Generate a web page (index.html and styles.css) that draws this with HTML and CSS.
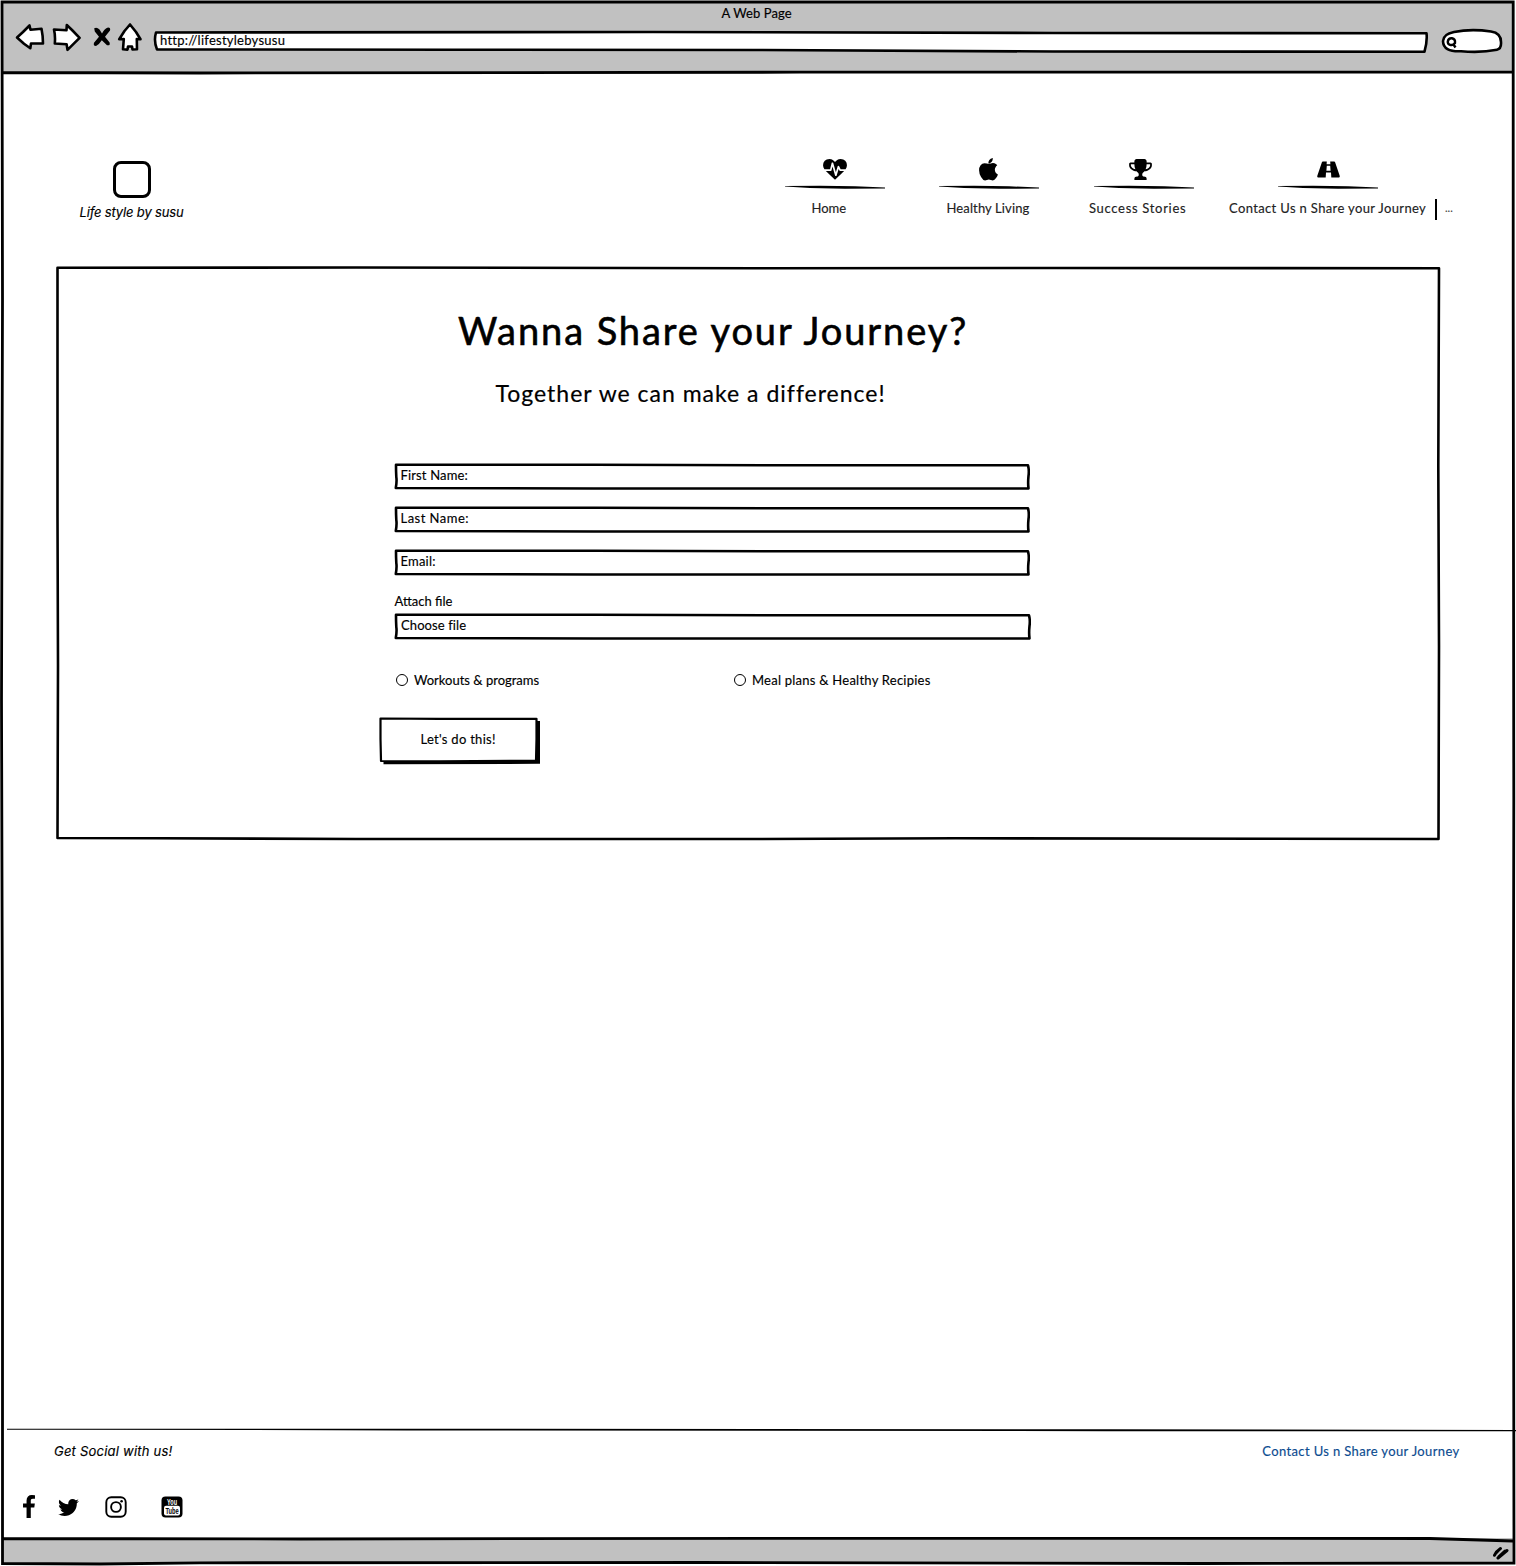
FILE: index.html
```html
<!DOCTYPE html>
<html lang="en">
<head>
<meta charset="utf-8">
<title>A Web Page</title>
<link rel="stylesheet" href="styles.css">
</head>
<body>
<div class="window">
  <header class="toolbar">
    <div class="window-title">A Web Page</div>
    <div class="controls">
      <svg class="ctl back" viewBox="0 0 30 30" width="30" height="30"><path class="key" d="M2 15.500 8 10 14.500 3.500 15.500 7.800 26.500 6.800Q28 14 28 21.500L16 21.500 15.300 26.300 9 21.800Z"/></svg>
      <svg class="ctl forward" viewBox="0 0 30 30" width="30" height="30"><path class="key" d="M3 7.500 15.500 8.200 15.800 3 21 8 28.600 15.800 16.500 27.800 15.600 22.200 3.800 21.500Q4.500 14 3 7.500Z"/></svg>
      <svg class="ctl stop" viewBox="0 0 20 22" width="20" height="22"><path d="M2.200 2.200Q5 .8 7.500 3.500L10 7.500Q12.500 2.800 16 1.600 18.800 1.500 18 4.500L13 10.800 17.600 16.500Q18.500 20 15 19.200L9.800 14.200Q7.500 18 4 20 1 20 2 16.800L7 10.800 2.800 5.500Z"/></svg>
      <svg class="ctl home" viewBox="0 0 26 30" width="26" height="30"><path class="key" d="M13 2.500 7.500 9 2.200 17.200 6.800 17 6 27.300 10.500 27.600 11 24.500 15 24.500 15.500 27.500 20 27.300 19.800 17 23.500 17.200 19 10Z"/></svg>
      <div class="address">
        <svg class="outline" viewBox="0 0 1276 24"><path d="M3 2.500 500 2 900 3 1273.500 3.200Q1274.500 11 1271.500 21.700L900 21.500 600 20 300 19.700 4 19.500Q.5 11 3 2.500Z"/></svg>
        <span>http://lifestylebysusu</span>
      </div>
      <svg class="ctl search" viewBox="0 0 62 26" width="62" height="26"><path class="key" d="M13 4Q30 .5 50 3.500 60 5 60 14 60.500 21 56 21.700 40 25 20 23.200 2 24 2 13 2.500 6 13 4Z"/><path class="glass" d="M6.800 13.500Q7.500 10 11 10.300 14.500 11 14 15 12 17.800 9 16.800 6.500 16 6.800 13.500ZM12.500 16.500 14.500 19.500"/></svg>
    </div>
  </header>

  <div class="masthead">
    <a class="brand">
      <span class="brand-mark"></span>
      <span class="brand-name">Life style by susu</span>
    </a>
    <nav class="nav">
      <a class="nav-item nav-home">
        <svg class="icon" viewBox="0 0 1792 1536" width="24" height="20.500"><path d="M1280 896h305q-5 6-10 10.500t-9 7.500l-3 4-623 600q-18 18-44 18t-44-18l-624-602q-5-2-21-20h369q22 0 39.500-13.500t22.500-34.500l70-281 190 667q6 20 23 33t39 13q21 0 38-13t23-33l146-485 56 112q18 35 57 35zm512-428q0 145-103 300h-369l-111-221q-8-17-25.500-27t-36.500-8q-45 5-56 46l-129 430-196-686q-6-20-23.500-33t-39.500-13-39 13.500-22 34.500l-116 464h-423q-103-155-103-300 0-220 127-344t351-124q62 0 126.500 21.500t120 58 95.500 68.500 76 68q36-36 76-68t95.500-68.500 120-58 126.500-21.500q224 0 351 124t127 344z"/></svg>
        <svg class="rule" viewBox="0 0 100 4"><path d="M0 1 35 .8 70 1.300 100 2.600 100 3.600 60 3.700 25 3 0 1.600Z"/></svg>
        <span class="label">Home</span>
      </a>
      <a class="nav-item nav-living">
        <svg class="icon" viewBox="193 0 1392 1664" width="19" height="22.500"><path d="M1585 1215q-39 125-123 250-129 196-257 196-49 0-140-32-86-32-151-32-61 0-142 33-81 34-132 34-152 0-301-259-147-261-147-503 0-228 113-374 113-144 284-144 72 0 177 30 104 30 138 30 45 0 143-34 102-34 173-34 119 0 213 65 52 36 104 100-79 67-114 118-65 94-65 207 0 124 69 223t158 126zm-376-1173q0 61-29 136-30 75-93 138-54 54-108 72-37 11-104 17 3-149 78-257 74-107 250-148 1 3 2.500 11t2.500 11q0 4 .5 10t.5 10z"/></svg>
        <svg class="rule" viewBox="0 0 100 4"><path d="M0 1 35 .8 70 1.300 100 2.600 100 3.600 60 3.700 25 3 0 1.600Z"/></svg>
        <span class="label">Healthy Living</span>
      </a>
      <a class="nav-item nav-stories">
        <svg class="icon" viewBox="64 128 1664 1536" width="23" height="21"><path d="M522 883q-74-162-74-371h-256v96q0 78 94.500 162t235.500 113zm1078-275v-96h-256q0 209-74 371 141-29 235.500-113t94.500-162zm128-128v128q0 71-41.500 143t-112 130-173 97.500-215.500 44.500q-42 54-95 95-38 34-52.500 72.500t-14.500 89.500q0 54 30.500 91t97.500 37q75 0 133.500 45.500t58.500 114.500v64q0 14-9 23t-23 9h-832q-14 0-23-9t-9-23v-64q0-69 58.500-114.500t133.500-45.500q67 0 97.500-37t30.500-91q0-51-14.500-89.500t-52.500-72.500q-53-41-95-95-113-5-215.500-44.500t-173-97.500-112-130-41.500-143v-128q0-40 28-68t68-28h288v-96q0-66 47-113t113-47h576q66 0 113 47t47 113v96h288q40 0 68 28t28 68z"/></svg>
        <svg class="rule" viewBox="0 0 100 4"><path d="M0 1 35 .8 70 1.300 100 2.600 100 3.600 60 3.700 25 3 0 1.600Z"/></svg>
        <span class="label">Success Stories</span>
      </a>
      <a class="nav-item nav-contact">
        <svg class="icon" viewBox="0 0 23 17" width="23" height="17"><path fill-rule="evenodd" d="M5.800.5H9.800L9.600 3.200H13.400L13.200.5H17.200Q17.800.5 18.100 1.200L22.600 14.500Q23.200 16.500 21.800 16.500H14.300L14 11.500H9L8.700 16.500H1.200Q-.2 16.500 .4 14.500L4.900 1.200Q5.200.5 5.800.5ZM9.800 4.800 9.400 9.800H13.600L13.200 4.800Z"/></svg>
        <svg class="rule" viewBox="0 0 100 4"><path d="M0 1 35 .8 70 1.300 100 2.600 100 3.600 60 3.700 25 3 0 1.600Z"/></svg>
        <span class="label">Contact Us n Share your Journey</span>
      </a>
      <span class="divider"></span>
      <span class="more">...</span>
    </nav>
  </div>

  <main class="card">
    <svg class="outline" viewBox="0 0 1385 575"><path d="M1.500 1.800 300 1.500 700 2.300 1000 2 1383 2.300 1382.300 200 1383 380 1382.500 573 900 572.300 700 573 300 573 100 572.200 1.500 572 2 400 1.500 250Z"/></svg>
    <h1>Wanna Share your Journey?</h1>
    <h2>Together we can make a difference!</h2>
    <form class="form">
      <label class="field first"><svg class="outline" viewBox="0 0 636 27"><path d="M2 1.800 200 1.700 400 2.300 634 2.300Q635.300 7 634.500 13 633.800 20 634.500 25.500L400 25.500 200 25.500 1.800 25Q3 18 2.300 14 2 8 2 1.800Z"/></svg><span>First Name:</span></label>
      <label class="field last"><svg class="outline" viewBox="0 0 636 27"><path d="M2 1.800 200 1.700 400 2.300 634 2.300Q635.300 7 634.500 13 633.800 20 634.500 25.500L400 25.500 200 25.500 1.800 25Q3 18 2.300 14 2 8 2 1.800Z"/></svg><span>Last Name:</span></label>
      <label class="field email"><svg class="outline" viewBox="0 0 636 27"><path d="M2 1.800 200 1.700 400 2.300 634 2.300Q635.300 7 634.500 13 633.800 20 634.500 25.500L400 25.500 200 25.500 1.800 25Q3 18 2.300 14 2 8 2 1.800Z"/></svg><span>Email:</span></label>
      <div class="attach">Attach file</div>
      <label class="field file"><svg class="outline" viewBox="0 0 637 27"><path d="M2 1.800 200 1.700 400 2.300 635 2.300Q636.300 7 635.500 13 634.800 20 635.500 25.500L400 25.500 200 25.500 1.800 25Q3 18 2.300 14 2 8 2 1.800Z"/></svg><span>Choose file</span></label>
      <div class="choices">
        <label class="choice workouts"><i class="radio"></i><span>Workouts &amp; programs</span></label>
        <label class="choice meals"><i class="radio"></i><span>Meal plans &amp; Healthy Recipies</span></label>
      </div>
      <div class="submit" role="button">
        <svg class="outline" viewBox="0 0 162 48"><path class="shadow" d="M4.500 43H157V4H161V46.800L4.500 47.300Z"/><path class="face" d="M1.500 1.500 60 1.900 157.500 1.800 157.500 22 157 43.800 60 44.300 2 44 1.500 22Z"/></svg>
        <span>Let's do this!</span>
      </div>
    </form>
  </main>

  <footer class="footer">
    <svg class="footer-rule" viewBox="0 0 1509 4" width="1509" height="4"><path d="M0 .8 400 .8 1100 1.300 1509 2.100V3.300L1100 3.200 400 2.400 30 1.700 0 1.700Z"/></svg>
    <div class="footer-text">
      <span class="social-title">Get Social with us!</span>
      <a class="contact-link">Contact Us n Share your Journey</a>
    </div>
    <div class="social">
      <svg class="facebook" viewBox="479 0 864 1664" width="12" height="23"><path d="M1343 12v264h-157q-86 0-116 36t-30 108v189h293l-39 296h-254v759h-306v-759h-255v-296h255v-218q0-186 104-288.500t277-102.500q147 0 228 12z"/></svg>
      <svg class="twitter" viewBox="108 256 1576 1280" width="21" height="17"><path d="M1684 408q-67 98-162 167 1 14 1 42 0 130-38 259.500t-115.500 248.500-184.500 210.500-258 146-323 54.500q-271 0-496-145 35 4 78 4 225 0 401-138-105-2-188-64.500t-114-159.500q33 5 61 5 43 0 85-11-112-23-185.500-111.500t-73.500-205.500v-4q68 38 146 41-66-44-105-115t-39-154q0-88 44-163 121 149 294.500 238.500t371.500 99.500q-8-38-8-74 0-134 94.500-228.500t228.500-94.500q140 0 236 102 109-21 205-78-37 115-142 178 93-10 186-50z"/></svg>
      <svg class="instagram" viewBox="0 0 22 22" width="22" height="22"><rect x="1.300" y="1.300" width="19.400" height="19.400" rx="5"/><circle cx="11" cy="11" r="4.900"/><circle class="dot" cx="16.600" cy="5.300" r="1.300"/></svg>
      <svg class="youtube" viewBox="0 0 22 22" width="22" height="22"><rect x=".5" y=".5" width="21" height="21" rx="4"/><rect class="screen" x="3" y="9.800" width="16" height="9.800" rx="2"/><text class="you" x="6" y="8.600" textLength="10" lengthAdjust="spacingAndGlyphs">You</text><text class="tube" x="4.400" y="18" textLength="13.200" lengthAdjust="spacingAndGlyphs">Tube</text></svg>
    </div>
  </footer>

  <div class="statusbar">
    <svg class="grip" viewBox="0 0 18 14" width="18" height="14"><path d="M2.500 9.300Q4 5.500 8.500 2.500M6 12 15 4.500M3.500 7.500 7.500 3.300M7 10.500 13 5"/></svg>
  </div>

  <svg class="frame" viewBox="0 0 1516 1566"><path d="M2 2H1513.200V300L1513.800 800 1513.300 1100 1514 1563 1200 1563.500 700 1562.500 200 1562.800 100 1564 2.500 1563.500V1060L1.500 700 2.500 300ZM2 72.500 200 73 800 72.200 1513 72M3 1538.500 300 1539 800 1538.300 1430 1538.500 1513 1541"/></svg>
</div>
</body>
</html>
```
FILE: styles.css
```css
* {
  box-sizing: border-box;
}

body {
  margin: 0;
  background: #fff;
  color: #000;
  font: 13px/16px Lato, "Open Sans", sans-serif;
  -webkit-text-stroke: 0.15px currentColor;
}

svg {
  display: block;
  flex: none;
}

.window {
  position: relative;
  display: flex;
  flex-direction: column;
  width: 1516px;
  height: 1566px;
  overflow: hidden;
}

.frame {
  position: absolute;
  inset: 0;
  fill: none;
  stroke: #000;
  stroke-width: 2.8;
  pointer-events: none;
}

/* Sketched outline stretched behind the text of a box */
.outline {
  position: absolute;
  inset: 0;
  width: 100%;
  height: 100%;
  fill: #fff;
  stroke: #000;
  stroke-width: 2.6;
  stroke-linejoin: round;
}

.outline + span {
  position: relative;
}

/* Browser bar */
.toolbar {
  height: 72px;
  margin: 1px 2px 0;
  padding-top: 4px;
  background: #c1c1c1;
}

.window-title {
  padding-left: 719.5px;
  letter-spacing: 0.08px;
}

.controls {
  display: flex;
  align-items: flex-start;
  padding: 1px 0 0 13px;
}

.key {
  fill: #fff;
  stroke: #000;
  stroke-width: 2.6;
  stroke-linejoin: round;
}

.forward {
  margin-left: 6px;
}

.stop {
  margin: 3.5px 0 0 11px;
}

.home {
  margin-left: 5px;
}

.address {
  position: relative;
  width: 1276px;
  height: 24px;
  margin: 8px 0 0 10px;
  padding: 2px 0 0 7px;
  letter-spacing: 0.25px;
}

.search {
  margin: 6px 0 0 12px;
}

.glass {
  fill: none;
  stroke: #000;
  stroke-width: 2.4;
}

/* Site header */
.masthead {
  display: flex;
  align-items: flex-start;
  justify-content: space-between;
  height: 194px;
  padding: 85px 62px 0 79px;
}

.brand {
  display: flex;
  flex-direction: column;
  align-items: center;
  width: 105px;
  padding-top: 3px;
}

.brand-mark {
  width: 38px;
  height: 37px;
  border: 3px solid #000;
  border-radius: 8px;
}

.brand-name {
  margin-top: 6px;
  font-family: Inter, sans-serif;
  font-style: italic;
  letter-spacing: -0.17px;
  white-space: nowrap;
}

.nav {
  display: flex;
  align-items: flex-start;
}

.nav-item {
  display: grid;
  grid-template-rows: 27px 15px 16px;
  justify-items: start;
  color: #222;
}

.icon {
  fill: #000;
}

.rule {
  width: 100px;
  height: 4px;
  fill: #000;
}

.label {
  white-space: nowrap;
}

.nav-home {
  width: 100px;
}

.nav-home .icon {
  margin: 1px 0 0 38px;
}

.nav-home .label {
  margin-left: 26.5px;
}

.nav-living {
  width: 100px;
  margin-left: 54px;
}

.nav-living .icon {
  margin-left: 40px;
}

.nav-living .label {
  margin-left: 7.5px;
  letter-spacing: 0.12px;
}

.nav-stories {
  width: 105px;
  margin-left: 50px;
}

.nav-stories .icon {
  margin: 1px 0 0 39.5px;
}

.nav-stories .rule {
  margin-left: 5px;
}

.nav-stories .label {
  letter-spacing: 0.69px;
}

.nav-contact {
  width: 198px;
  margin-left: 35px;
}

.nav-contact .icon {
  margin: 3px 0 0 88px;
}

.nav-contact .rule {
  margin-left: 49px;
}

.nav-contact .label {
  letter-spacing: 0.36px;
}

.divider {
  width: 2px;
  height: 21px;
  margin: 41px 0 0 8px;
  background: #000;
}

.more {
  width: 9px;
  margin: 42px 0 0 8px;
  color: #444;
  font-size: 11px;
}

/* Card with the form */
.card {
  position: relative;
  width: 1385px;
  height: 575px;
  margin-left: 56px;
  margin-top: -1px;
  padding: 41px 0 0 338px;
}

h1,
h2 {
  position: relative;
  margin: 0;
  font-weight: 400;
  white-space: nowrap;
}

h1 {
  margin-left: 64px;
  font-size: 38px;
  line-height: 46px;
  letter-spacing: 1.92px;
  -webkit-text-stroke-width: 0.6px;
}

h2 {
  margin: 26px 0 0 101.5px;
  font-size: 23px;
  line-height: 28px;
  letter-spacing: 1px;
  -webkit-text-stroke-width: 0.2px;
}

.form {
  position: relative;
  width: 636px;
  margin-top: 56px;
}

.field {
  position: relative;
  display: block;
  height: 27px;
  margin-bottom: 16px;
  padding: 4px 0 0 6.5px;
}

.first {
  letter-spacing: 0.15px;
}

.last {
  letter-spacing: 0.47px;
}

.email {
  letter-spacing: 0.2px;
}

.attach {
  margin-top: 17px;
  padding-left: 0.5px;
}

.file {
  width: 637px;
  margin: 4px 0 32px;
  padding-left: 7px;
  letter-spacing: 0.1px;
}

.choices {
  display: grid;
  grid-template-columns: 338px 1fr;
  padding-left: 2px;
}

.choice {
  display: flex;
  align-items: center;
  gap: 6px;
}

.meals {
  letter-spacing: 0.24px;
}

.radio {
  width: 12px;
  height: 12px;
  border: 1.4px solid #000;
  border-radius: 50%;
}

.submit {
  position: relative;
  width: 162px;
  height: 48px;
  margin: 29px 0 0 -15px;
  padding: 14px 0 0 41.5px;
  letter-spacing: 0.28px;
}

.shadow {
  fill: #000;
  stroke: none;
}

.face {
  stroke-width: 2.2;
}

/* Site footer */
.footer {
  width: 1516px;
  margin-top: auto;
  height: 110px;
}

.footer-rule {
  margin-left: 7px;
}

.footer-text {
  display: flex;
  justify-content: space-between;
  margin-top: 11px;
  padding: 0 56.5px 0 54px;
}

.social-title {
  font-family: Inter, sans-serif;
  font-style: italic;
  letter-spacing: 0.22px;
}

.contact-link {
  color: #0b4b8f;
  letter-spacing: 0.36px;
}

.social {
  display: flex;
  align-items: flex-start;
  padding: 36px 0 0 23px;
}

.twitter {
  margin: 4px 0 0 22.5px;
}

.instagram {
  margin: 1px 0 0 26.5px;
  fill: none;
  stroke: #000;
  stroke-width: 1.9;
}

.dot {
  fill: #000;
  stroke: none;
}

.youtube {
  margin: 1px 0 0 34px;
  overflow: visible;
  -webkit-text-stroke: 0;
}

.screen,
.you {
  fill: #fff;
}

.you,
.tube {
  font: bold 9px "Liberation Sans", sans-serif;
}

/* Bottom bar with the resize grip */
.statusbar {
  display: flex;
  justify-content: flex-end;
  height: 26px;
  margin: 0 2px 2px;
  padding: 8px 4px 0 0;
  background: #c1c1c1;
}

.grip {
  fill: none;
  stroke: #000;
  stroke-width: 3;
  stroke-linecap: round;
}
```
